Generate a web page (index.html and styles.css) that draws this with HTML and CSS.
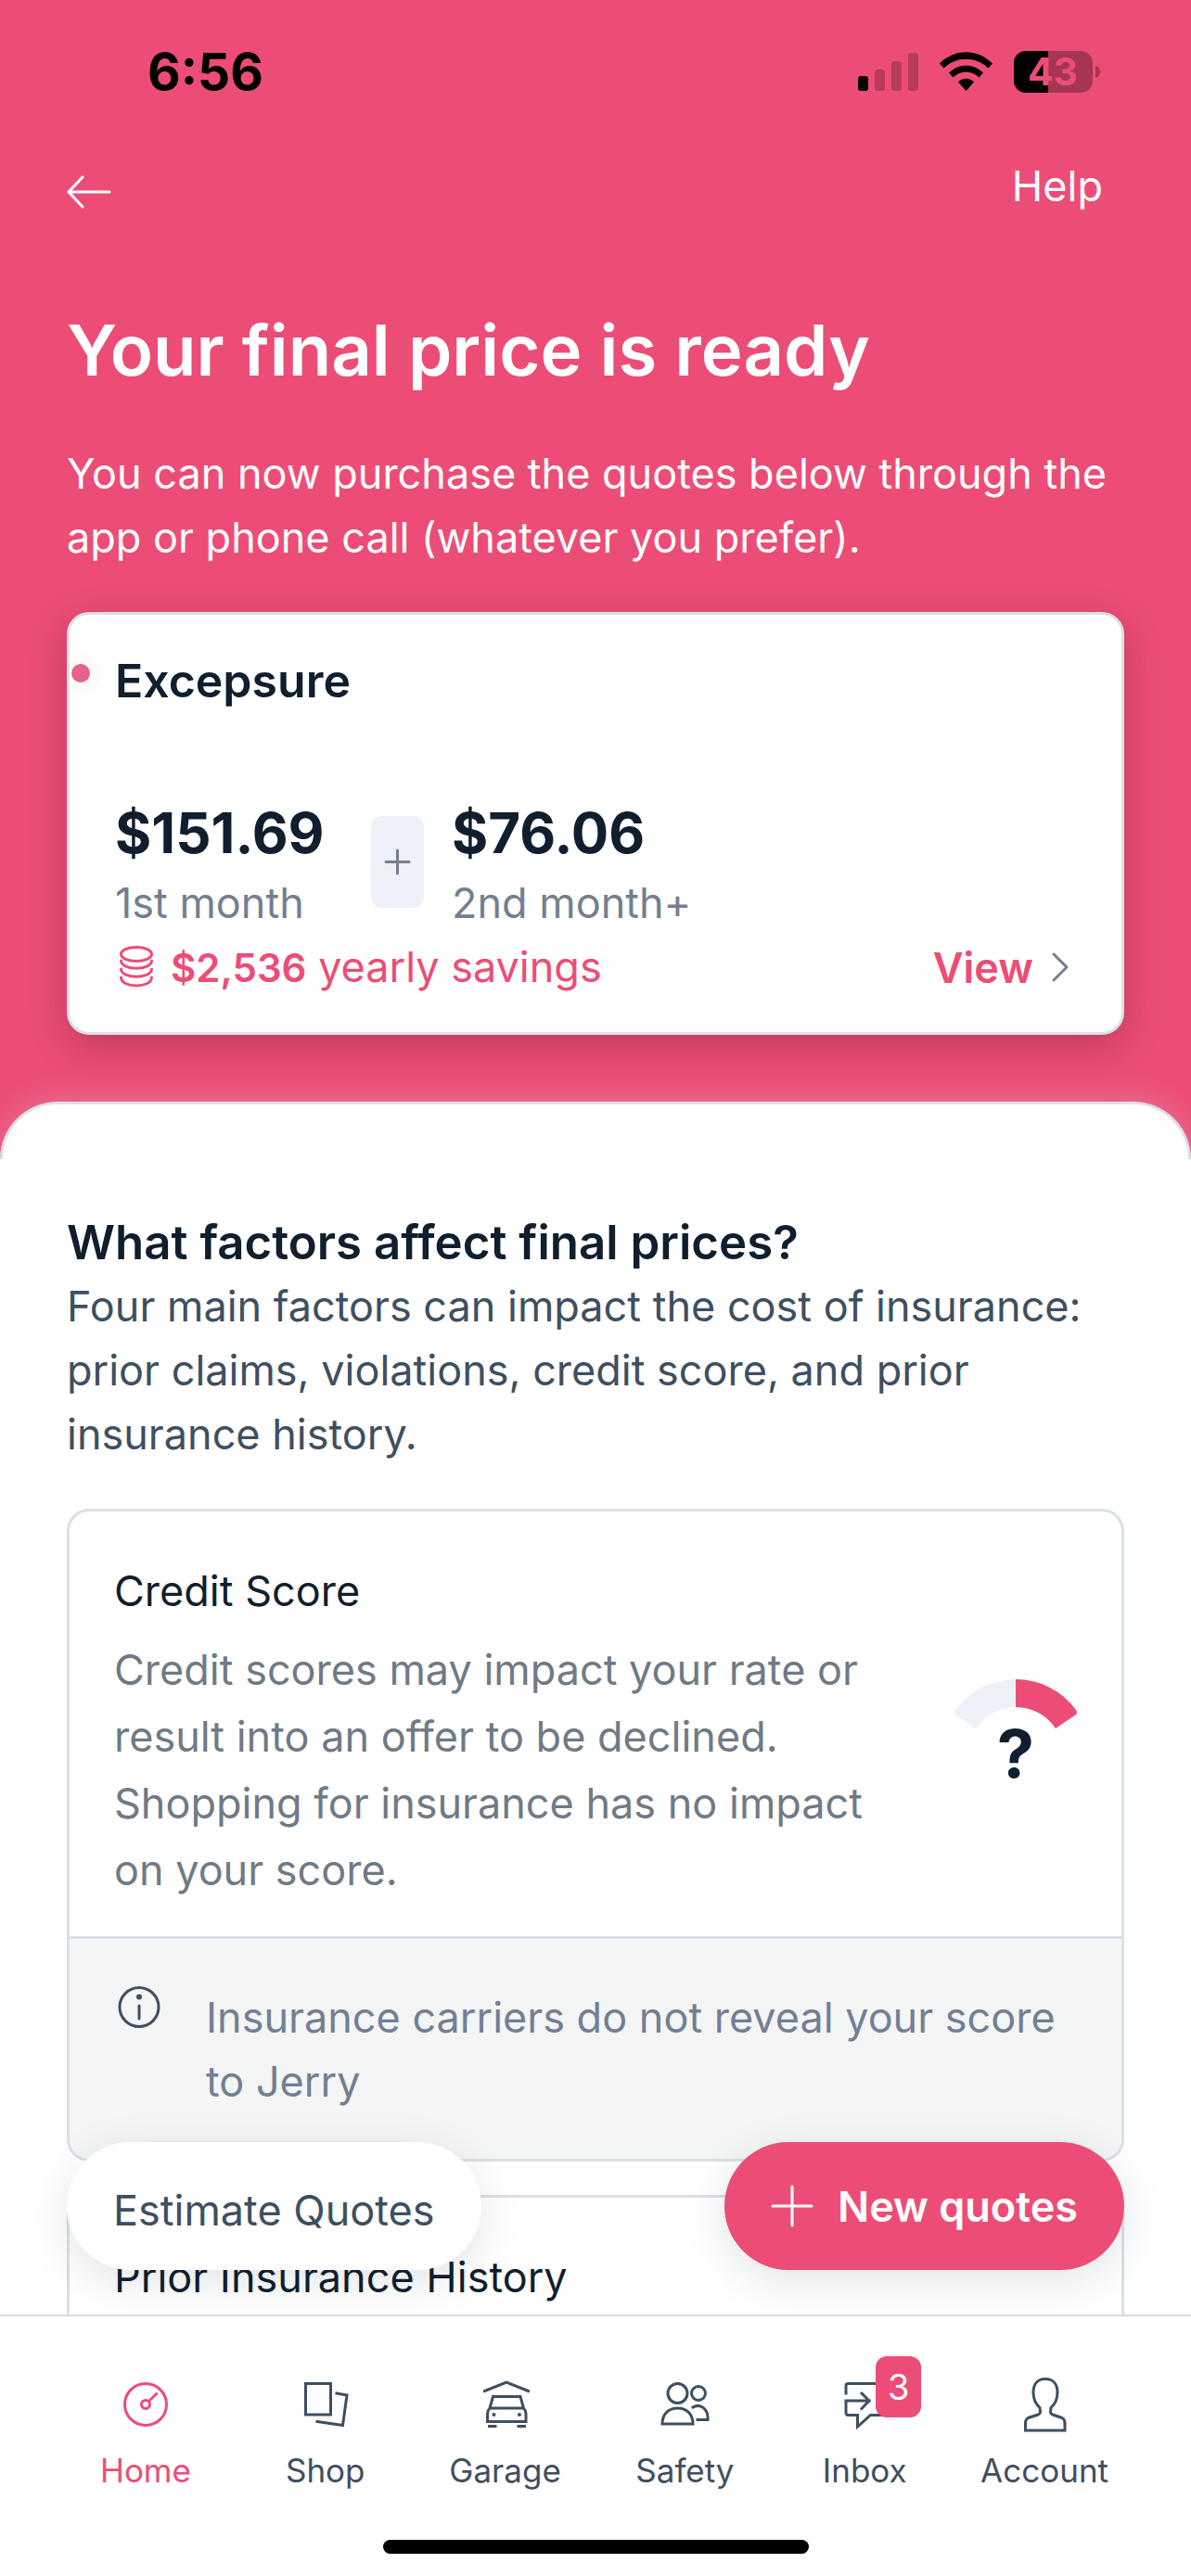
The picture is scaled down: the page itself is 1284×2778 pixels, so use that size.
FILE: index.html
```
<!DOCTYPE html>
<html lang="en">
<head>
<meta charset="utf-8">
<meta name="viewport" content="width=device-width, initial-scale=1">
<title>Your final price</title>
<link rel="stylesheet" href="styles.css">
</head>
<body>
<div class="app">
  <main class="content">
    <div class="hero">
      <div class="status-bar">
        <span class="clock">6:56</span>
        <svg class="status-icons" width="262" height="61" viewBox="0 -8 262 61" aria-hidden="true">
          <rect x="0" y="27" width="11" height="16" rx="3"/>
          <g opacity=".22">
            <rect x="18" y="20" width="11" height="23" rx="3"/>
            <rect x="36" y="11" width="11" height="32" rx="3"/>
            <rect x="54" y="2" width="11" height="41" rx="3"/>
          </g>
          <path d="M88 13.500C104-3 129-3 145 13.500L140.500 18.500C127 5.500 106 5.500 92.500 18.500Z"/>
          <path d="M98 23.500C108.500 13 124.500 13 135 23.500L130.500 28.500C122.500 20.500 110.500 20.500 102.500 28.500Z"/>
          <path d="M108 33.500C113 28.500 120 28.500 125 33.500L116.500 43Z"/>
          <rect x="168" y="0" width="85" height="45" rx="13" opacity=".3"/>
          <path d="M205 0H181A13 13 0 0 0 168 13V32A13 13 0 0 0 181 45H205Z"/>
          <path d="M256 16C263 18 263 27 256 29Z" opacity=".3"/>
          <text class="battery-level" x="210" y="37" text-anchor="middle">43</text>
        </svg>
      </div>
      <header class="top-bar">
        <button class="back" type="button" aria-label="Back">
          <svg width="48" height="36" viewBox="0 0 48 36" fill="none" stroke="currentColor" stroke-width="3" stroke-linecap="round" stroke-linejoin="round"><path d="M46 18H2M17 2L2 18L17 34"/></svg>
        </button>
        <a class="help" href="#help">Help</a>
      </header>
      <div class="intro">
        <h1>Your final price is ready</h1>
        <p>You can now purchase the quotes below through the app or phone call (whatever you prefer).</p>
      </div>
      <article class="quote-card">
        <span class="unread-dot"></span>
        <h2>Excepsure</h2>
        <div class="prices">
          <div class="price first"><strong>$151.69</strong><span>1st month</span></div>
          <div class="plus">
            <svg width="29" height="29" viewBox="0 0 29 29" fill="none" stroke="currentColor" stroke-width="3" stroke-linecap="round"><path d="M14.500 2V27M2 14.500H27"/></svg>
          </div>
          <div class="price"><strong>$76.06</strong><span>2nd month+</span></div>
        </div>
        <div class="card-footer">
          <svg width="46" height="48" viewBox="0 0 46 48" fill="none" stroke="currentColor" stroke-width="3" stroke-linecap="round"><ellipse cx="23" cy="10" rx="16.500" ry="7.500"/><path d="M6.500 17C6.500 28 39.500 28 39.500 17M6.500 26C6.500 37 39.500 37 39.500 26M6.500 35C6.500 47 39.500 47 39.500 35"/></svg>
          <p class="savings"><strong>$2,536</strong> yearly savings</p>
          <a class="view" href="#quote">View
            <svg width="34" height="36" viewBox="0 0 34 36" fill="none" stroke="#737f94" stroke-width="3" stroke-linecap="round" stroke-linejoin="round"><path d="M10 4L24 18L10 32"/></svg>
          </a>
        </div>
      </article>
      <div class="sheet-top"></div>
    </div>
    <section class="sheet">
      <h2>What factors affect final prices?</h2>
      <p class="lead">Four main factors can impact the cost of insurance: prior claims, violations, credit score, and prior insurance history.</p>
      <article class="factor">
        <div class="factor-main">
          <div class="factor-text">
            <h3>Credit Score</h3>
            <p>Credit scores may impact your rate or result into an offer to be declined. Shopping for insurance has no impact on your score.</p>
          </div>
          <div class="gauge">
            <svg width="132" height="53" viewBox="0 0 132 53">
              <path fill="#eef1f7" d="M66 0A80 80 0 0 0 1 33Q-1 36 1 38L23 53A51 51 0 0 1 66 30Z"/>
              <path fill="#ec4d76" d="M66 0A80 80 0 0 1 131 33Q133 36 131 38L109 53A51 51 0 0 0 66 30Z"/>
            </svg>
            <span>?</span>
          </div>
        </div>
        <div class="note">
          <svg width="54" height="47" viewBox="0 0 54 47" fill="none" stroke="#3e4f61" stroke-width="3"><circle cx="27" cy="23.500" r="21"/><path d="M27 22V36" stroke-linecap="round"/><circle cx="27" cy="12.500" r="3" fill="#3e4f61" stroke="none"/></svg>
          <p>Insurance carriers do not reveal your score to Jerry</p>
        </div>
      </article>
      <article class="factor">
        <div class="factor-main">
          <div class="factor-text"><h3>Prior Insurance History</h3></div>
        </div>
      </article>
    </section>
  </main>
  <footer class="bottom">
    <div class="actions">
      <button class="pill estimate" type="button">Estimate Quotes</button>
      <button class="pill new" type="button">
        <svg width="46" height="46" viewBox="0 0 46 46" fill="none" stroke="currentColor" stroke-width="3" stroke-linecap="round"><path d="M23 2V44M2 23H44"/></svg>
        New quotes
      </button>
    </div>
    <nav class="tabs">
      <a class="tab active" href="#home">
        <span class="tab-icon"><svg viewBox="0 0 60 60"><circle cx="30" cy="30" r="22.500"/><circle cx="30" cy="30" r="4.500"/><path d="M33.500 26.500L41.500 18.500"/></svg></span>
        Home
      </a>
      <a class="tab" href="#shop">
        <span class="tab-icon"><svg viewBox="0 0 60 60"><path d="M8.500 7.500H35.500V41H8.500ZM42 18L53 20L48.500 52.500L21 48.500"/></svg></span>
        Shop
      </a>
      <a class="tab" href="#garage">
        <span class="tab-icon"><svg viewBox="0 0 60 60"><path d="M7.500 15.500L31 6L54.500 15.500M16.500 21.500H46L49.500 34H13ZM13 34C11 36 10.500 37 10.500 40V48.500H52V40C52 37 51.500 36 49.500 34M12.500 53.500H19M44 53.500H50.500"/><circle class="solid" cx="17.500" cy="41" r="2"/><circle class="solid" cx="45" cy="41" r="2"/></svg></span>
        Garage
      </a>
      <a class="tab" href="#safety">
        <span class="tab-icon"><svg viewBox="0 0 60 60"><circle cx="22.500" cy="18" r="10.500"/><circle cx="45" cy="18" r="7.500"/><path d="M6 51C6 40 13 34 22.500 34C32 34 39 40 39 51ZM39 33C47 28 56 35 55 46.500H44"/></svg></span>
        Safety
      </a>
      <a class="tab" href="#inbox">
        <span class="tab-icon"><svg viewBox="0 0 60 60"><path d="M10 18V10Q10 7.500 12.500 7.500H52V41.500H36.500L22.500 54V41.500H12.500Q10 41.500 10 39V26H35M27 18L35 26L27 34.500"/></svg><span class="badge">3</span></span>
        Inbox
      </a>
      <a class="tab" href="#account">
        <span class="tab-icon"><svg viewBox="0 0 60 60"><path d="M31 2.500C22 2.500 18 9 18 17C18 24 20 29 25 33.500L25.500 38Q25.500 40 23 41L12.500 44.500Q9.500 46 9.500 50V58H52V50Q52 46 49 44.500L39 41Q36.500 40 36.500 38L37 33.500C42 29 44 24 44 17C44 9 40 2.500 31 2.500Z"/></svg></span>
        Account
      </a>
    </nav>
    <div class="home-indicator"></div>
  </footer>
</div>
</body>
</html>
```
FILE: styles.css
```
* {
  box-sizing: border-box;
}

body,
h1,
h2,
h3,
p {
  margin: 0;
}

body {
  background: #fff;
  color: #101e2e;
  font-family: "Inter", "Liberation Sans", sans-serif;
  font-size: 45px;
  line-height: 69px;
}

a {
  color: inherit;
  text-decoration: none;
}

button {
  border: 0;
  padding: 0;
  background: none;
  color: inherit;
  font: inherit;
}

svg {
  display: block;
  flex: none;
}

.app {
  display: flex;
  flex-direction: column;
  height: 100vh;
}

.content {
  flex: 1;
  min-height: 0;
  overflow-y: auto;
  scrollbar-width: none;
}

/* Pink header area */

.hero {
  background: #ec4d76;
  color: #fff;
}

.status-bar {
  display: flex;
  align-items: center;
  justify-content: space-between;
  padding: 43px 97px 0 159px;
  color: #000;
}

.clock {
  font-size: 55px;
  font-weight: 700;
  line-height: 68px;
}

.battery-level {
  fill: #ec4d76;
  font-size: 41px;
  font-weight: 700;
}

.top-bar {
  display: flex;
  align-items: flex-start;
  justify-content: space-between;
  margin-top: 55px;
  padding: 0 95px 0 72px;
}

.back {
  display: flex;
  align-items: center;
  height: 82px;
}

.intro {
  padding: 81px 72px 46px;
}

.intro h1 {
  margin-bottom: 51px;
  font-size: 76px;
  font-weight: 600;
  line-height: 96px;
}

.quote-card {
  position: relative;
  margin: 0 72px;
  padding: 34px 49px 35px;
  border: 3px solid #dae0e9;
  border-radius: 24px;
  overflow: hidden;
  background: #fff;
  color: #101e2e;
  box-shadow: 0 12px 40px rgba(60, 0, 20, 0.24);
}

.unread-dot {
  position: absolute;
  top: 53px;
  left: 2px;
  width: 20px;
  height: 20px;
  border-radius: 50%;
  background: #e56389;
  box-shadow: 0 0 0 12px #fffafb;
}

.quote-card h2 {
  font-size: 50px;
  font-weight: 600;
  line-height: 75px;
}

.prices {
  display: flex;
  align-items: flex-start;
  margin-top: 86px;
}

.price {
  display: flex;
  flex-direction: column;
}

.price.first {
  min-width: 276px;
}

.price strong {
  font-size: 60px;
  font-weight: 700;
  line-height: 81px;
}

.price span {
  color: #737f90;
}

.plus {
  display: grid;
  place-items: center;
  width: 57px;
  height: 99px;
  margin: 22px 30px 0 0;
  border-radius: 12px;
  background: #eef1f7;
  color: #737f90;
}

.card-footer {
  display: flex;
  align-items: center;
  gap: 14px;
  color: #ec4d76;
}

.savings {
  flex: 1;
}

.savings strong {
  font-size: 42px;
  font-weight: 600;
}

.view {
  display: flex;
  align-items: center;
  gap: 12px;
  font-weight: 600;
}

/* White sheet */

.sheet-top {
  height: 62px;
  margin-top: 72px;
  border: 3px solid #dae0e9;
  border-bottom: 0;
  border-radius: 62px 62px 0 0;
  background: #fff;
  box-shadow: 0 0 32px rgba(218, 224, 233, 0.3);
}

.sheet {
  position: relative;
  padding: 56px 72px 200px;
  background: #fff;
}

.sheet h2 {
  font-size: 51px;
  font-weight: 600;
  line-height: 68px;
}

.lead {
  margin-bottom: 46px;
  color: #3e4f61;
}

.factor {
  margin-bottom: 36px;
  border: 3px solid #dae0e9;
  border-radius: 24px;
  overflow: hidden;
}

.factor-main {
  display: flex;
  align-items: center;
  gap: 80px;
  padding: 50px 48px 35px;
  line-height: 72px;
}

.factor-text {
  flex: 1;
}

.factor-text h3 {
  font-size: 45px;
  font-weight: 400;
}

.factor-text p {
  margin-top: 13px;
  color: #6f7a86;
}

.gauge {
  display: flex;
  flex-direction: column;
  align-items: center;
  padding-bottom: 6px;
}

.gauge span {
  font-size: 72px;
  font-weight: 700;
  line-height: 53px;
}

.note {
  display: flex;
  align-items: flex-start;
  gap: 45px;
  padding: 50px 48px 49px;
  border-top: 3px solid #dae0e9;
  background: #f4f6f6;
  color: #737f94;
}

/* Floating actions and tab bar */

.bottom {
  position: relative;
  background: #fff;
}

.actions {
  position: absolute;
  right: 0;
  bottom: 100%;
  left: 0;
  display: flex;
  justify-content: space-between;
  padding: 60px 72px 48px;
  overflow: hidden;
  pointer-events: none;
}

.pill {
  display: flex;
  align-items: center;
  gap: 26px;
  height: 138px;
  padding: 0 50px;
  border-radius: 69px;
  box-shadow: 0 12px 48px rgba(16, 30, 46, 0.12);
  pointer-events: auto;
}

.pill.estimate {
  padding-top: 8px;
  background: #fff;
  color: #3e4f61;
}

.pill.new {
  background: #ec4d76;
  color: #fff;
  font-weight: 600;
}

.tabs {
  display: grid;
  grid-template-columns: repeat(6, 1fr);
  padding: 65px 61px 0 60px;
  border-top: 2px solid #d9dbde;
}

.tab {
  display: flex;
  flex-direction: column;
  align-items: center;
  gap: 17px;
  color: #3e4f61;
  font-size: 35px;
  line-height: 48px;
}

.tab.active {
  color: #ec4d76;
}

.tab-icon {
  position: relative;
}

.tab-icon svg {
  width: 60px;
  height: 60px;
  fill: none;
  stroke: currentColor;
  stroke-width: 3;
  stroke-linecap: square;
}

.tab-icon .solid {
  fill: currentColor;
  stroke: none;
}

.badge {
  position: absolute;
  top: -22px;
  left: 42px;
  width: 49px;
  height: 66px;
  border-radius: 12px;
  background: #ec4d76;
  color: #fff;
  font-size: 38px;
  line-height: 66px;
  text-align: center;
}

.home-indicator {
  width: 459px;
  height: 15px;
  margin: 51px auto 24px;
  border-radius: 8px;
  background: #000;
}
```
